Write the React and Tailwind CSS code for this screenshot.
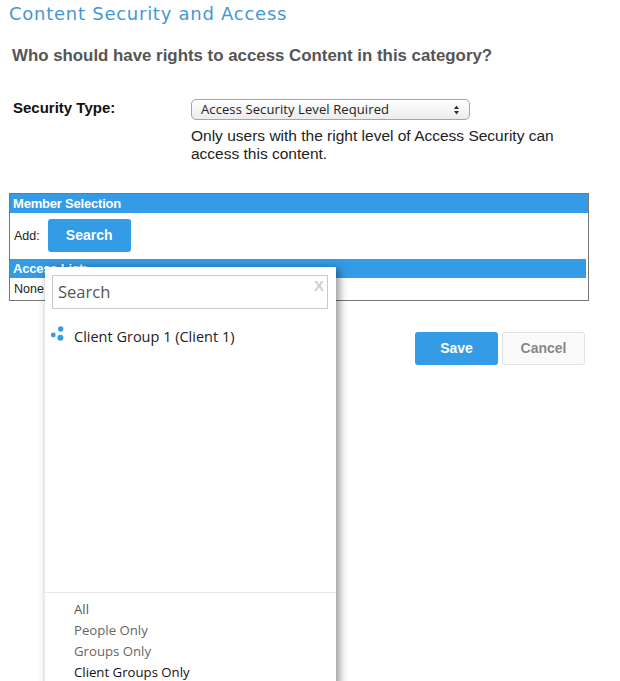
import React from 'react';

const lucida = "font-['DejaVu_Sans',sans-serif]";

const SectionBar = ({ title, className = '' }) => (
    <div className={`h-[19px] pl-[3px] bg-[#349be6] text-white text-[13px] leading-[19px] font-bold tracking-[-0.2px] font-['Liberation_Sans',sans-serif] ${className}`}>
        {title}
    </div>
);

const GroupIcon = () => (
    <svg width="14" height="15" viewBox="0 0 14 15" className="shrink-0 -mt-px">
        <circle cx="10.7" cy="3" r="2.7" fill="#349be6" />
        <circle cx="3.3" cy="9" r="2.4" fill="#349be6" />
        <circle cx="10.4" cy="11.7" r="3" fill="#349be6" />
    </svg>
);

const SearchPopup = () => (
    <div className="absolute left-[45px] top-[267px] w-[291px] h-[440px] flex flex-col bg-white shadow-[3px_2px_9px_rgba(0,0,0,0.45)] font-['Open_Sans',sans-serif]">
        <div className="pt-2 pl-[7px] pr-[8px]">
            <div className="h-[34px] flex items-start justify-between pl-[5px] pr-[3px] border border-[#c9c9c9]">
                <span className="text-[16.5px] leading-[32px] text-[#555]">Search</span>
                <span className="text-[15px] leading-[19px] font-bold text-[#cfcfcf] font-['Liberation_Sans',sans-serif]">X</span>
            </div>
        </div>
        <div className="flex items-start gap-[10px] mt-[18px] pl-[5px] text-[14.5px] leading-5 text-[#222]">
            <GroupIcon />
            <span>Client Group 1 (Client 1)</span>
        </div>
        <div className="mt-[245px] border-t border-[#e8e8e8] pt-[6px] pl-[29px] text-[13.2px] leading-[21px]">
            <div className="text-[#555]">All</div>
            <div className="text-[#666]">People Only</div>
            <div className="text-[#666]">Groups Only</div>
            <div className="text-[#111]">Client Groups Only</div>
        </div>
    </div>
);

const App = () => {
    return (
        <div className="relative h-[681px] w-[620px] overflow-hidden bg-white font-['Liberation_Sans',sans-serif]">
            <h1 className={`pl-[9px] pt-[2px] text-[18px] leading-6 tracking-[0.74px] text-[#4597d2] ${lucida}`}>
                Content Security and Access
            </h1>
            <h2 className="pl-[12px] mt-[18px] text-[16.85px] leading-6 font-bold text-[#555]">
                Who should have rights to access Content in this category?
            </h2>

            <div className="flex mt-[28px] pl-[13px]">
                <div className="w-[178px] text-[15px] leading-[24px] font-bold text-[#111]">Security Type:</div>
                <div className="w-[370px]">
                    <div className="w-[279px] h-[21px] mt-[3px] flex items-center justify-between px-[9px] rounded-[5px] border border-[#a5a5a5] bg-gradient-to-b from-white to-[#ececec] text-[13px] text-[#222] font-['Open_Sans',sans-serif]">
                        <span className="tracking-[0.1px]">Access Security Level Required</span>
                        <svg width="7" height="10" viewBox="0 0 7 10">
                            <path d="M3.5 0.5 6 4H1z M3.5 9.5 6 6H1z" fill="#333" />
                        </svg>
                    </div>
                    <p className="mt-[7px] text-[15.5px] leading-[18px] text-[#222]">
                        Only users with the right level of Access Security can access this content.
                    </p>
                </div>
            </div>

            <div className="mt-[30px] ml-[9px] w-[580px] h-[108px] border border-[#777] text-[12.5px] text-[#222]">
                <SectionBar title="Member Selection" />
                <div className="h-[46px] flex items-center gap-[8px] pl-[4px]">
                    <span>Add:</span>
                    <button className="w-[83px] h-[33px] -mt-[2px] rounded-[3px] bg-[#349be6] text-white text-[14px] font-bold">Search</button>
                </div>
                <SectionBar title="Access List:" className="mr-[2px]" />
                <div className="pl-[4px] pt-[3px] leading-4">None</div>
            </div>

            <div className="flex justify-end gap-1 mt-[31px] pr-[35px] text-[14px] font-bold">
                <button className="w-[83px] h-[33px] rounded-[3px] bg-[#349be6] text-white">Save</button>
                <button className="w-[83px] h-[33px] rounded-[3px] border border-[#e2e2e2] bg-[#fafafa] text-[#888]">Cancel</button>
            </div>

            <SearchPopup />
        </div>
    );
};

export default App;
